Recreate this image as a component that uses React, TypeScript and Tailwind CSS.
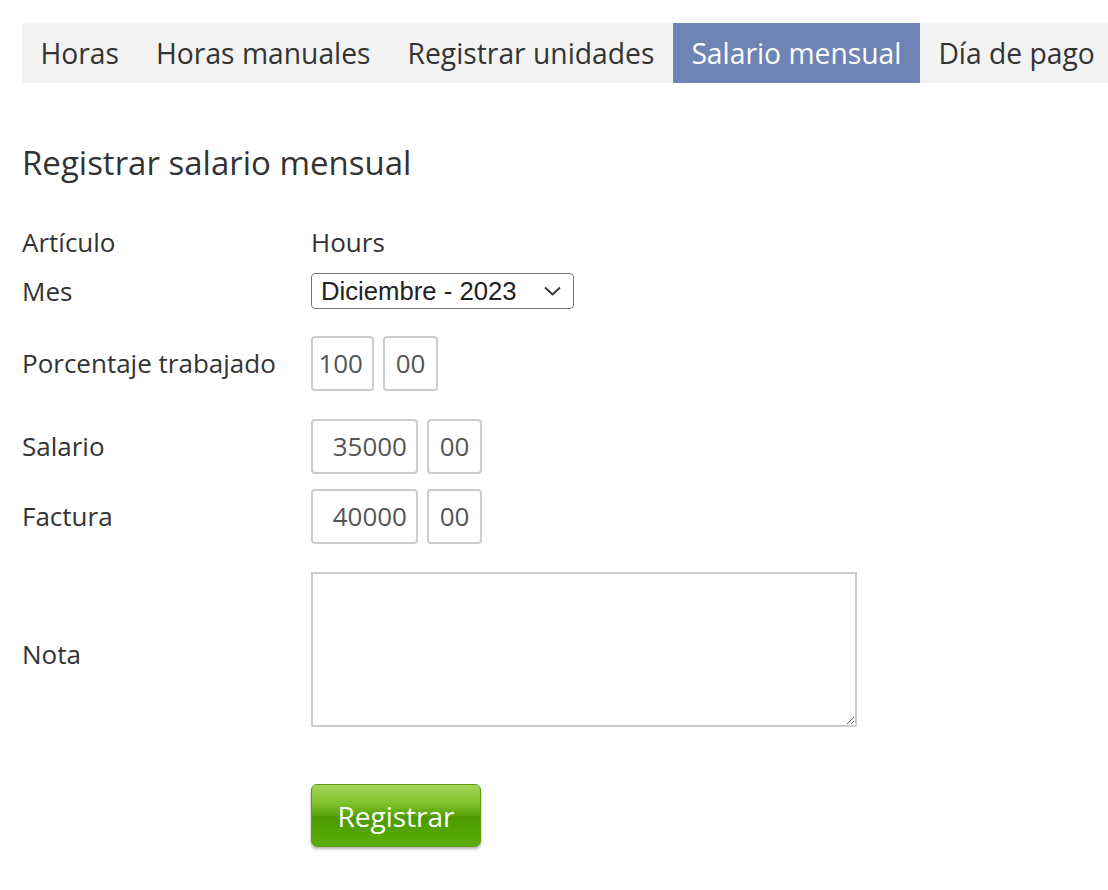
import React from "react";

const tabs = ["Horas", "Horas manuales", "Registrar unidades", "Salario mensual", "Día de pago"];

function NumBox({ value, w, center }: { value: string; w: string; center?: boolean }) {
  return (
    <div
      className={`${w} h-[55px] flex items-center ${center ? "justify-center" : "justify-end pr-[9px]"} border-2 border-[#cccccc] rounded-[4px] text-[26px] text-[#555555] bg-white`}
    >
      {value}
    </div>
  );
}

export default function App() {
  return (
    <div
      className="min-h-[890px] bg-white text-[#333333] pl-[22px]"
      style={{ fontFamily: '"Open Sans", sans-serif' }}
    >
      <div className="h-[23px]" />
      <div className="h-[60px] bg-[#f3f3f3] flex items-stretch text-[28.25px] leading-none">
        {tabs.map((t) => (
          <div
            key={t}
            className={
              t === "Salario mensual"
                ? "px-[18.5px] flex items-center bg-[#6d84b4] text-white whitespace-nowrap"
                : "px-[18.5px] flex items-center whitespace-nowrap"
            }
          >
            {t}
          </div>
        ))}
      </div>

      <h1 className="mt-[60px] text-[33px] leading-[40px] font-normal">Registrar salario mensual</h1>

      <div className="mt-[41px] flex flex-col text-[26px]">
        <div className="flex items-center h-[36px]">
          <div className="w-[289px]">Artículo</div>
          <div>Hours</div>
        </div>
        <div className="flex items-center h-[36px] mt-[13px]">
          <div className="w-[289px]">Mes</div>
          <div
            className="w-[263px] h-[36px] border-[1.5px] border-[#767676] rounded-[4px] flex items-center justify-between pl-[9px] pr-[12px] text-[#222222] text-[25.7px]"
            style={{ fontFamily: '"Liberation Sans", Arial, sans-serif' }}
          >
            <span>Diciembre - 2023</span>
            <svg width="17" height="10" viewBox="0 0 17 10" fill="none">
              <path d="M1 1.5 L8.5 8.5 L16 1.5" stroke="#333" strokeWidth="1.8" />
            </svg>
          </div>
        </div>
        <div className="flex items-center h-[55px] mt-[27px]">
          <div className="w-[289px]">Porcentaje trabajado</div>
          <div className="flex gap-[9px]">
            <NumBox value="100" w="w-[63px]" />
            <NumBox value="00" w="w-[55px]" center />
          </div>
        </div>
        <div className="flex items-center h-[55px] mt-[28px]">
          <div className="w-[289px]">Salario</div>
          <div className="flex gap-[9px]">
            <NumBox value="35000" w="w-[107px]" />
            <NumBox value="00" w="w-[55px]" center />
          </div>
        </div>
        <div className="flex items-center h-[56px] mt-[14px]">
          <div className="w-[289px]">Factura</div>
          <div className="flex gap-[9px]">
            <NumBox value="40000" w="w-[107px]" />
            <NumBox value="00" w="w-[55px]" center />
          </div>
        </div>
        <div className="flex items-center h-[155px] mt-[28px]">
          <div className="w-[289px] pt-[9px]">Nota</div>
          <textarea className="w-[546px] h-[155px] border-2 border-[#cccccc] outline-none resize" />
        </div>
        <div className="flex mt-[57px]">
          <div className="w-[289px]" />
          <button
            className="w-[170px] h-[63px] rounded-[6px] border border-[#5e9a0c] text-white text-[28px] shadow-[0_2px_3px_rgba(0,0,0,0.3)] bg-[linear-gradient(to_bottom,#a6d75c_0%,#7fc12b_30%,#5aa40a_50%,#4d9a00_52%,#5aae08_100%)]"
            style={{ fontFamily: '"Open Sans", sans-serif' }}
          >
            Registrar
          </button>
        </div>
      </div>
    </div>
  );
}
